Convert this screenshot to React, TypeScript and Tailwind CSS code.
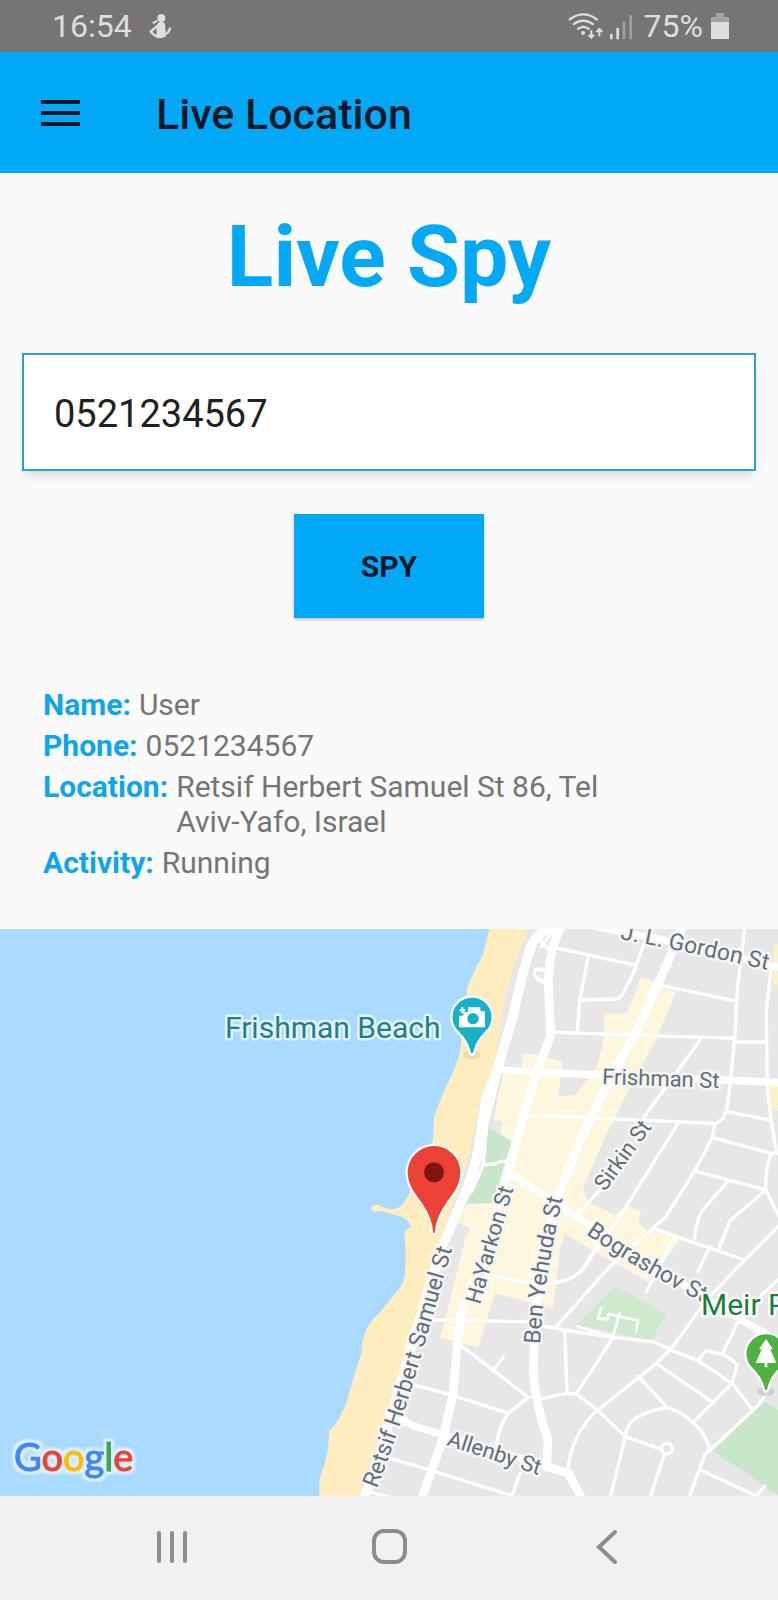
import { useState } from "react";

function StatusBar() {
  return (
    <div className="flex h-[52px] items-center justify-between bg-[#757575] pl-[52px] pr-[49px] text-[#dedede]">
      <div className="flex items-center gap-4">
        <span className="text-[32px] leading-none">16:54</span>
        <svg width="24" height="26" viewBox="445 38 72 78" aria-hidden="true">
          <circle cx="485" cy="53" r="12" fill="currentColor" />
          <path d="M496 102 Q508 98 511 84 M474 76 L453 94 Q462 106 476 109" fill="none" stroke="currentColor" strokeWidth="7" strokeLinecap="round" />
          <path d="M473 70 Q485 58 496 70 L499 108 Q482 118 466 110 Q474 100 470 88Z" fill="currentColor" />
          <path d="M459 69 L473 61" stroke="currentColor" strokeWidth="6" />
        </svg>
      </div>
      <div className="flex items-center gap-2">
        <svg width="64" height="28" viewBox="84 32 192 84" aria-hidden="true">
          <g fill="none" stroke="currentColor" strokeWidth="7">
            <path d="M87 56 Q130 22 173 56" />
            <path d="M99 70 Q130 46 161 70" />
            <path d="M112 84 Q130 69 148 84" />
            <path d="M154 87 V108 M146 101 L154 109 L162 101" strokeWidth="6" />
            <path d="M178 105 V84 M169 92 L178 83 L187 92" strokeWidth="6" />
          </g>
          <circle cx="129" cy="95" r="6" fill="currentColor" />
          <path d="M210 98h8v16h-8z M229 80h8v34h-8z" fill="currentColor" />
          <path d="M248 61h8v53h-8z M268 42h8v72h-8z" fill="#a0a0a0" />
        </svg>
        <span className="ml-1 text-[32px] leading-none">75%</span>
        <svg width="18" height="26" viewBox="0 0 18 26" aria-hidden="true">
          <path d="M5 0h8v4h5v5H0V4h5z" fill="#a3a3a3" />
          <path d="M0 9h18v17H0z" fill="currentColor" />
        </svg>
      </div>
    </div>
  );
}

function MapView() {
  return (
    <svg viewBox="0 0 2334 1701" className="block h-auto w-full bg-[#e7e7e7]" role="img" aria-label="Map of the Tel Aviv coast">
      <rect width="2334" height="1701" fill="#e7e7e7" />
      {/* sand */}
      <path d="M0 0 H1585 L1545 98 L1520 188 L1500 288 L1490 378 L1440 518 L1400 708 L1375 790 L1320 925 L1240 1193 L1180 1383 L1085 1701 H0Z" fill="#ffecbf" />
      {/* sea */}
      <path d="M0 0 H1468 L1448 78 Q1410 150 1402 175 L1380 368 Q1365 425 1340 468 Q1318 520 1302 563 L1300 618 Q1290 720 1230 788 Q1210 835 1185 840 Q1160 842 1145 832 Q1128 822 1115 832 Q1108 842 1125 848 Q1150 844 1172 854 L1206 864 Q1224 872 1232 893 Q1210 905 1213 920 Q1220 980 1213 1043 Q1210 1065 1190 1088 Q1155 1130 1135 1155 Q1102 1185 1098 1205 Q1085 1230 1085 1273 Q1068 1320 1050 1383 Q1040 1425 1020 1463 Q1005 1490 988 1503 L984 1563 Q975 1610 958 1653 V1701 H0Z" fill="#aadaff" />
      {/* commercial blocks */}
      <path d="M1924 143 L1964 160 L1989 178 L2029 188 L1964 338 L1884 488 L1814 628 L1749 778 L1764 818 L1844 858 L1884 828 L1924 848 L1914 878 L1944 908 L2004 913 L2044 928 L1944 1058 L1724 933 L1694 913 L1679 968 L1659 1138 L1580 1118 L1485 1093 L1435 1255 L1320 1228 L1395 933 L1410 898 L1370 880 L1405 823 L1480 820 L1535 698 L1538 638 L1500 628 L1505 575 L1480 575 L1510 430 L1565 425 L1570 373 L1614 378 L1689 398 L1674 503 L1724 498 L1789 418 L1809 348 L1814 253 L1879 253 L1904 198Z" fill="#fef6dd" />
      <path d="M2322 45 H2334 V168 L2320 165Z M2306 470 H2334 V545 L2314 538Z" fill="#fff1c6" />
      {/* parks */}
      <g fill="#c8e6c9">
        <path d="M1465 595 L1540 640 L1530 700 L1475 823 L1400 825 L1450 705Z" />
        <path d="M1844 1073 L1999 1153 L1954 1233 L1729 1188Z" fill="#cee9cd" />
        <path d="M2294 1418 L2334 1443 V1698 L2139 1565Z" />
      </g>

      {/* side streets */}
      <g fill="none" stroke="#fff" strokeWidth="10" strokeLinejoin="round" strokeLinecap="round">
        <g transform="translate(1614 -12)">
          <path d="M0 135 H25 M0 165 L25 175 M60 70 L290 120 M320 50 L295 120 L285 148 L255 205 Q248 220 235 222 L130 225 M150 95 L125 230 L118 320" />
          <path d="M50 322 L590 340 M620 12 L598 190 L590 340 L575 490 L566 555 L555 580 L530 598 L522 640 L470 738 L380 880 L345 910 L210 1030 L55 1205" />
          <path d="M375 182 L592 228 M598 351 H680 M700 120 L685 260 L688 490 L700 590 L715 680" />
          <path d="M0 572 L530 595 M490 340 L315 580 M190 790 L120 865 M420 595 L230 900 L180 965 L130 1040" />
          <path d="M566 560 L695 585 M525 638 L700 685 L720 685 M700 685 Q680 735 684 795 M470 738 L684 795 L720 870 M570 768 L490 860 Q475 890 470 940 M684 795 L575 888 L545 968" />
          <path d="M345 910 L620 1005 M730 895 L620 1005 L510 1120 L400 1270 L355 1315 L180 1455 M410 935 L325 1100 M515 965 L480 1040" />
          <path d="M10 65 L48 12 M0 35 L40 85" />
        </g>
        <g transform="translate(900 -12)">
          <path d="M720 130 Q700 130 703 145 Q706 160 725 165" strokeWidth="8" />
          <path d="M597 450 L560 600 L550 718 M550 718 L515 800 M550 718 Q580 722 600 710 L632 708 M690 572 H720" />
          <path d="M560 1048 L690 1075" />
        </g>
        <g transform="translate(900 933)">
          <path d="M395 240 L690 245 M485 318 L685 472 H720 M585 385 L610 352 M325 430 L455 465 L625 520 L685 472 M625 520 Q600 550 590 610" />
          <path d="M260 652 L390 690 L640 768 M660 700 L636 768 M205 755 L270 772" />
        </g>
        <g transform="translate(1614 933)">
          <path d="M30 128 Q110 130 145 70 Q165 30 195 0" />
          <path d="M0 255 L80 270 L225 292 L345 305 L395 328 L480 362 L582 430 L645 510 M80 270 L87 460 M225 292 L115 462 M0 478 L87 460 L115 462 L178 510 L262 590 L370 628" />
          <path d="M178 510 Q95 590 90 695 M262 590 Q240 680 218 768 M262 590 Q265 550 300 530 Q340 510 388 503 Q430 515 465 548 Q505 580 515 632 M300 408 L388 503 M355 370 L528 490 M465 548 L582 430 L598 375 Q580 355 553 343 L503 332 L480 362 M600 245 L553 343" />
          <path d="M378 645 L338 768 M684 460 Q670 490 645 510 L500 645 L455 768 M488 690 L655 768 M680 738 L655 768 M720 120 L670 165 M550 0 L545 20" />
          <circle cx="387" cy="626" r="16" />
          <path d="M190 203 L180 235 L207 238 L212 222 L300 242 L294 275 M245 218 L225 290 M120 260 L225 290" strokeWidth="8" />
        </g>
      </g>
      {/* main streets */}
      <g fill="none" stroke="#fff" strokeLinejoin="round" strokeLinecap="round">
        <path d="M1640 0 Q1596 28 1585 75 Q1558 170 1540 258 L1490 428 L1460 500 L1430 688 L1405 770 L1325 955 L1245 1215 L1135 1590 L1095 1701" strokeWidth="29" />
        <path d="M1680 0 Q1648 60 1645 160 L1652 320 L1610 430 L1542 660 L1515 750 L1460 960 L1385 1145 L1370 1263 L1360 1393 L1330 1525 L1268 1701" strokeWidth="26" />
        <path d="M2044 0 L2004 98 L1914 298 L1814 478 L1744 628 L1674 798 L1640 950 L1605 1150 L1600 1333 Q1608 1430 1644 1533 L1640 1613 L1705 1633 L1742 1701" strokeWidth="26" />
        <path d="M1495 422 L1620 430 L2334 460 M1784 -8 L2000 35 L2334 115" strokeWidth="22" />
        <path d="M1535 736 L1744 873 L2150 1130 L2334 1235 M1200 1468 L1240 1490 L1330 1518 L1650 1615" strokeWidth="22" />
        <circle cx="1205" cy="1475" r="18" fill="#fff" />
      </g>

      {/* labels */}
      <g transform="scale(3)" fontFamily="Roboto, sans-serif" strokeLinejoin="round" style={{ paintOrder: "stroke" }}>
        <defs>
          <path id="retsif" d="M377 560 Q392 520 402 490 T452 320 L460 287" />
          <path id="yehuda" d="M540 415 Q544 347 564 264" />
          <path id="gordon" d="M620 10 Q690 23 780 44" />
          <path id="bograshov" d="M586 305 Q640 343 720 382" />
          <filter id="halo" x="-10%" y="-20%" width="120%" height="140%" colorInterpolationFilters="sRGB">
            <feMorphology in="SourceAlpha" operator="dilate" radius="3" result="spread" />
            <feGaussianBlur in="spread" stdDeviation="1" result="soft" />
            <feFlood floodColor="#dceffd" />
            <feComposite in2="soft" operator="in" result="glow" />
            <feMerge>
              <feMergeNode in="glow" />
              <feMergeNode in="SourceGraphic" />
            </feMerge>
          </filter>
        </defs>
        <g fontSize="22" fill="#616e77" stroke="#f5f5f5" strokeWidth="5">
          <text fontSize="23"><textPath href="#gordon">J. L. Gordon St</textPath></text>
          <text transform="translate(602 155) rotate(2)">Frishman St</text>
          <text transform="translate(605 263) rotate(-54)">Sirkin St</text>
          <text transform="translate(480 376) rotate(-74)">HaYarkon St</text>
          <text fontSize="23"><textPath href="#yehuda">Ben Yehuda St</textPath></text>
          <text fontSize="23"><textPath href="#retsif">Retsif Herbert Samuel St</textPath></text>
          <text transform="translate(446 516) rotate(18)">Allenby St</text>
          <text fontSize="23"><textPath href="#bograshov">Bograshov St</textPath></text>
        </g>
        <text x="225" y="109" fontSize="30" fill="#1d7f8c" stroke="#e4f4ff" strokeWidth="5">Frishman Beach</text>
        <text x="701" y="386" fontSize="30" fill="#188038" stroke="#fff" strokeWidth="5">Meir Park</text>
        <text x="14" y="542" fontSize="38" fontFamily="Lato, sans-serif" strokeWidth="1" filter="url(#halo)">
          <tspan fill="#4285f4" stroke="#4285f4">G</tspan>
          <tspan fill="#ea4335" stroke="#ea4335">o</tspan>
          <tspan fill="#fbbc05" stroke="#fbbc05">o</tspan>
          <tspan fill="#4285f4" stroke="#4285f4">g</tspan>
          <tspan fill="#34a853" stroke="#34a853">l</tspan>
          <tspan fill="#ea4335" stroke="#ea4335">e</tspan>
        </text>
      </g>

      {/* beach pin */}
      <g transform="translate(1416 263)">
        <ellipse cx="0" cy="115" rx="26" ry="14" fill="#e3d2a8" opacity=".7" />
        <path d="M0 114 Q-6 114 -9 100 Q-16 72 -42 47 A62 62 0 1 1 42 47 Q16 72 9 100 Q6 114 0 114Z" fill="#17b1c6" stroke="#fff" strokeWidth="7" />
        <path d="M-12 -14 V-28 H25 V-16 H39 V32 H-39 V-3 H-26 V-14Z" fill="#fff" />
        <path d="M-38 -19 H-20 M-29 -28 V-10" stroke="#fff" strokeWidth="6" />
        <circle cx="3" cy="6" r="17" fill="#17b1c6" />
      </g>
      {/* park pin */}
      <g transform="translate(2298 1273)">
        <ellipse cx="0" cy="115" rx="26" ry="14" fill="#c4c4c4" opacity=".7" />
        <path d="M0 114 Q-6 114 -9 100 Q-16 72 -42 47 A62 62 0 1 1 42 47 Q16 72 9 100 Q6 114 0 114Z" fill="#4db23f" stroke="#fff" strokeWidth="7" />
        <path d="M0 -43 L21 -12 H13 L31 29 H4 V42 H-4 V29 H-31 L-13 -12 H-21Z" fill="#fff" />
      </g>
      {/* target pin */}
      <g transform="translate(1302 730)">
        <path d="M0 186 Q-6 186 -6 176 Q-8 140 -36 98 C-52 74 -82 44 -82 0 A82 82 0 0 1 82 0 C82 44 52 74 36 98 Q8 140 6 176 Q6 186 0 186Z" fill="#ea4335" stroke="#fff" strokeWidth="6" />
        <circle r="30" fill="#811411" />
      </g>
    </svg>
  );
}

function SystemNav() {
  return (
    <nav className="flex h-[104px] items-center justify-around bg-[#f1f1f1] px-[62px] pb-[2px] text-[#8c8c8c]" aria-label="System">
      <button type="button" aria-label="Recent apps">
        <svg width="36" height="36" viewBox="0 0 36 36" fill="none" stroke="currentColor" strokeWidth="4" strokeLinecap="round">
          <path d="M6 4V32M19 4V32M32 4V32" />
        </svg>
      </button>
      <button type="button" aria-label="Home">
        <svg width="36" height="36" viewBox="0 0 36 36" fill="none" stroke="currentColor" strokeWidth="4">
          <rect x="3" y="2" width="31" height="31" rx="10" />
        </svg>
      </button>
      <button type="button" aria-label="Back">
        <svg width="36" height="36" viewBox="0 0 36 36" fill="none" stroke="currentColor" strokeWidth="4" strokeLinecap="round">
          <path d="M26 3L10 18L26 33" />
        </svg>
      </button>
    </nav>
  );
}

const details = [
  { label: "Name:", value: "User" },
  { label: "Phone:", value: "0521234567" },
  { label: "Location:", value: "Retsif Herbert Samuel St 86, Tel Aviv-Yafo, Israel" },
  { label: "Activity:", value: "Running" },
];

export default function App() {
  const [phone, setPhone] = useState("0521234567");
  return (
    <div className="flex min-h-screen flex-col bg-[#fafafa] font-['Roboto',sans-serif]">
      <StatusBar />
      <header className="flex h-[121px] items-center gap-[76px] bg-[#03a9f7] pl-[41px] text-[#041a28]">
        <button type="button" aria-label="Open menu">
          <svg width="39" height="26" viewBox="0 0 39 26" fill="currentColor">
            <path d="M0 0h39v4H0zM0 11h39v4H0zM0 22h39v4H0z" />
          </svg>
        </button>
        <span className="pt-[3px] text-[43px] font-medium leading-none">Live Location</span>
      </header>
      <main className="flex flex-1 flex-col">
        <h1 className="mt-[34px] text-center text-[86px] font-bold leading-[100px] text-[#03a9f4]">Live Spy</h1>
        <form className="mt-[46px] flex flex-col items-center px-[22px]" onSubmit={(e) => e.preventDefault()}>
          <input
            type="tel"
            aria-label="Phone number"
            value={phone}
            onChange={(e) => setPhone(e.target.value)}
            className="h-[118px] w-full border-2 border-[#2b9fcf] bg-white px-[30px] pt-[4px] text-[38px] text-[#212121] shadow-[0_8px_10px_-4px_rgba(0,0,0,0.15)] outline-none"
          />
          <button type="submit" className="mt-[43px] h-[104px] w-[190px] bg-[#03a9f7] text-[30px] font-bold text-[#041a28] shadow-[0_2px_3px_rgba(0,0,0,0.2)]">
            SPY
          </button>
        </form>
        <dl className="mt-[69px] flex flex-col gap-[6px] px-[43px] pb-[49px] text-[30px] leading-[35px]">
          {details.map((d) => (
            <div key={d.label} className="flex gap-2">
              <dt className="font-bold text-[#0ea5ec]">{d.label}</dt>
              <dd className="max-w-[440px] text-[#757575]">{d.value}</dd>
            </div>
          ))}
        </dl>
        <MapView />
      </main>
      <SystemNav />
    </div>
  );
}
